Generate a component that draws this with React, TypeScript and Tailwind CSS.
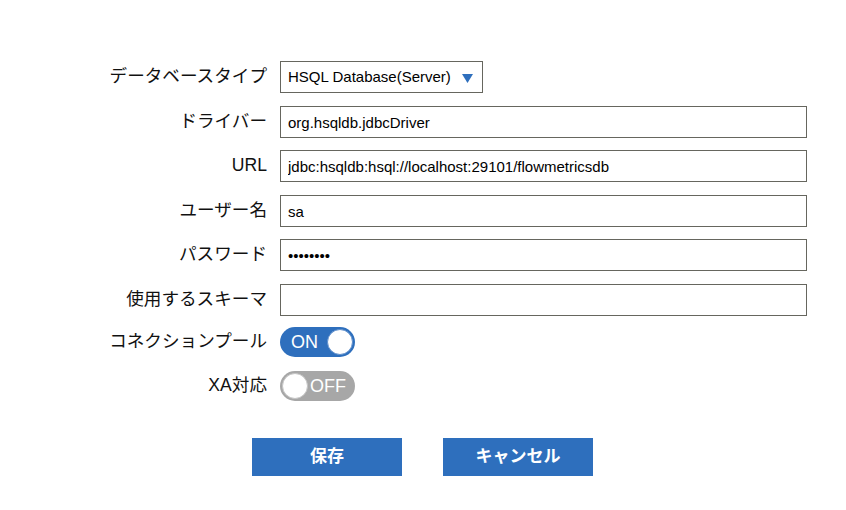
import React from "react";

const font = { fontFamily: '"Liberation Sans", "Noto Sans CJK JP", Arial, sans-serif' };

function Label({ children }: { children: React.ReactNode }) {
  return (
    <div className="w-[160px] shrink-0 text-right text-[17.6px] leading-none text-[#111] pr-[1px] whitespace-nowrap">
      {children}
    </div>
  );
}

function TextInput({ value, type = "text" }: { value: string; type?: string }) {
  return (
    <input
      readOnly
      type={type}
      value={value}
      className="w-[527px] h-[32px] border border-[#66665e] bg-white px-[7px] text-[15px] text-black outline-none"
      style={font}
    />
  );
}

function Toggle({ on }: { on: boolean }) {
  return on ? (
    <div className="relative w-[75px] h-[30px] rounded-full bg-[#2e6fbd] flex items-center">
      <span className="pl-[11px] text-[18px] leading-none text-white">ON</span>
      <span className="absolute right-[2px] top-[2px] w-[26px] h-[26px] rounded-full bg-white border border-[#5f8fcc]" />
    </div>
  ) : (
    <div className="relative w-[75px] h-[30px] rounded-full bg-[#a7a7a7] flex items-center">
      <span className="absolute left-[2px] top-[2px] w-[26px] h-[26px] rounded-full bg-white border border-[#c4c4c4]" />
      <span className="pl-[30px] text-[18px] leading-none text-white">OFF</span>
    </div>
  );
}

export default function App() {
  return (
    <div className="w-[846px] h-[510px] bg-white overflow-hidden" style={font}>
      <div className="pt-[61px] pl-[108px] flex flex-col">
        <div className="flex items-center gap-[12px] h-[32px]">
          <Label>データベースタイプ</Label>
          <div className="w-[203px] h-[32px] border border-[#66665e] flex items-center px-[7px] text-[15px] text-black">
            <span>HSQL Database(Server)</span>
            <svg width="11" height="9" viewBox="0 0 11 9" className="ml-[11px] mt-[2px]">
              <polygon points="0,0 11,0 5.5,9" fill="#2e6fbd" />
            </svg>
          </div>
        </div>
        <div className="flex items-center gap-[12px] h-[32px] mt-[13px]">
          <Label>ドライバー</Label>
          <TextInput value="org.hsqldb.jdbcDriver" />
        </div>
        <div className="flex items-center gap-[12px] h-[32px] mt-[12px]">
          <Label>URL</Label>
          <TextInput value="jdbc:hsqldb:hsql://localhost:29101/flowmetricsdb" />
        </div>
        <div className="flex items-center gap-[12px] h-[32px] mt-[13px]">
          <Label>ユーザー名</Label>
          <TextInput value="sa" />
        </div>
        <div className="flex items-center gap-[12px] h-[32px] mt-[12px]">
          <Label>パスワード</Label>
          <TextInput type="password" value="password" />
        </div>
        <div className="flex items-center gap-[12px] h-[32px] mt-[13px]">
          <Label>使用するスキーマ</Label>
          <TextInput value="" />
        </div>
        <div className="flex items-center gap-[12px] h-[30px] mt-[11px]">
          <Label>コネクションプール</Label>
          <Toggle on />
        </div>
        <div className="flex items-center gap-[12px] h-[30px] mt-[14px]">
          <Label>XA対応</Label>
          <Toggle on={false} />
        </div>
      </div>
      <div className="flex justify-center gap-[41px] mt-[37px] pr-[1px]">
        <button className="w-[150px] h-[38px] bg-[#2e6fbd] text-white font-bold text-[17px]">保存</button>
        <button className="w-[150px] h-[38px] bg-[#2e6fbd] text-white font-bold text-[17px]">キャンセル</button>
      </div>
    </div>
  );
}
